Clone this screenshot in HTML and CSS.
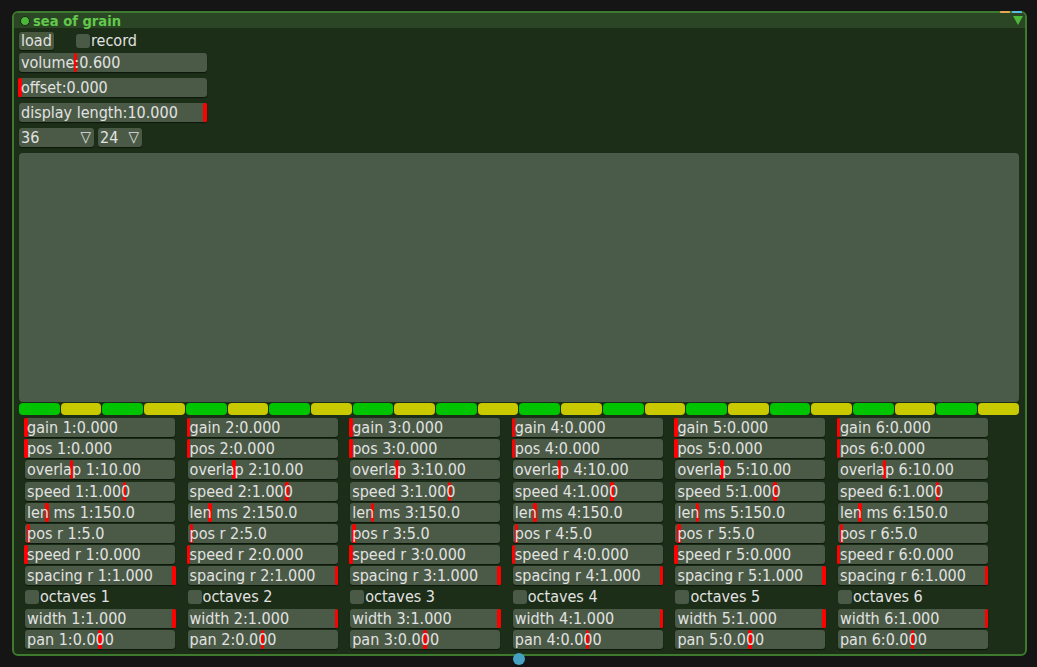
FILE: index.html
```html
<!DOCTYPE html>
<html>
<head>
<meta charset="utf-8">
<link rel="stylesheet" href="styles.css">
</head>
<body>
<div class="panel">
  <span class="pin pin-orange"></span>
  <span class="pin pin-blue"></span>
  <div class="header">
    <span class="dot"></span>
    <span class="title">sea of grain</span>
    <svg class="collapse" width="10" height="9" viewBox="0 0 10 9"><polygon points="0,0 10,0 5,9" fill="#4cb838"/></svg>
  </div>
  <div class="content">
    <div class="toprow">
      <div class="button">load</div>
      <div class="toggle"><span class="box"></span><span class="label">record</span></div>
    </div>
    <div class="slider wide first"><span class="mark" style="left:calc(0.3 * (100% - 2px) - 1px)"></span><span class="txt">volume:0.600</span></div>
    <div class="slider wide"><span class="mark" style="left:calc(0 * (100% - 2px) - 1px)"></span><span class="txt">offset:0.000</span></div>
    <div class="slider wide"><span class="mark" style="left:calc(1 * (100% - 2px) - 2px)"></span><span class="txt">display length:10.000</span></div>
    <div class="menus">
      <div class="menu m1"><span>36</span><span class="tri">▽</span></div>
      <div class="menu m2"><span>24</span><span class="tri">▽</span></div>
    </div>
    <div class="display"></div>
    <div class="bar">
      <span class="g"></span><span class="y"></span><span class="g"></span><span class="y"></span>
      <span class="g"></span><span class="y"></span><span class="g"></span><span class="y"></span>
      <span class="g"></span><span class="y"></span><span class="g"></span><span class="y"></span>
      <span class="g"></span><span class="y"></span><span class="g"></span><span class="y"></span>
      <span class="g"></span><span class="y"></span><span class="g"></span><span class="y"></span>
      <span class="g"></span><span class="y"></span><span class="g"></span><span class="y"></span>
    </div>
    <div class="voices">
      <div class="voice">
        <div class="slider"><span class="mark" style="left:calc(0 * (100% - 2px) - 1px)"></span><span class="txt">gain 1:0.000</span></div>
        <div class="slider"><span class="mark" style="left:calc(0 * (100% - 2px) - 1px)"></span><span class="txt">pos 1:0.000</span></div>
        <div class="slider"><span class="mark" style="left:calc(0.31 * (100% - 2px) - 1px)"></span><span class="txt">overlap 1:10.00</span></div>
        <div class="slider"><span class="mark" style="left:calc(0.667 * (100% - 2px) - 1px)"></span><span class="txt">speed 1:1.000</span></div>
        <div class="slider"><span class="mark" style="left:calc(0.145 * (100% - 2px) - 1px)"></span><span class="txt">len ms 1:150.0</span></div>
        <div class="slider"><span class="mark" style="left:calc(0.02 * (100% - 2px) - 1px)"></span><span class="txt">pos r 1:5.0</span></div>
        <div class="slider"><span class="mark" style="left:calc(0 * (100% - 2px) - 1px)"></span><span class="txt">speed r 1:0.000</span></div>
        <div class="slider"><span class="mark" style="left:calc(1 * (100% - 2px) - 1px)"></span><span class="txt">spacing r 1:1.000</span></div>
        <div class="toggle small"><span class="box"></span><span class="label">octaves 1</span></div>
        <div class="slider"><span class="mark" style="left:calc(1 * (100% - 2px) - 1px)"></span><span class="txt">width 1:1.000</span></div>
        <div class="slider"><span class="mark" style="left:calc(0.5 * (100% - 2px) - 1px)"></span><span class="txt">pan 1:0.000</span></div>
      </div>
      <div class="voice">
        <div class="slider"><span class="mark" style="left:calc(0 * (100% - 2px) - 1px)"></span><span class="txt">gain 2:0.000</span></div>
        <div class="slider"><span class="mark" style="left:calc(0 * (100% - 2px) - 1px)"></span><span class="txt">pos 2:0.000</span></div>
        <div class="slider"><span class="mark" style="left:calc(0.31 * (100% - 2px) - 1px)"></span><span class="txt">overlap 2:10.00</span></div>
        <div class="slider"><span class="mark" style="left:calc(0.667 * (100% - 2px) - 1px)"></span><span class="txt">speed 2:1.000</span></div>
        <div class="slider"><span class="mark" style="left:calc(0.145 * (100% - 2px) - 1px)"></span><span class="txt">len ms 2:150.0</span></div>
        <div class="slider"><span class="mark" style="left:calc(0.02 * (100% - 2px) - 1px)"></span><span class="txt">pos r 2:5.0</span></div>
        <div class="slider"><span class="mark" style="left:calc(0 * (100% - 2px) - 1px)"></span><span class="txt">speed r 2:0.000</span></div>
        <div class="slider"><span class="mark" style="left:calc(1 * (100% - 2px) - 1px)"></span><span class="txt">spacing r 2:1.000</span></div>
        <div class="toggle small"><span class="box"></span><span class="label">octaves 2</span></div>
        <div class="slider"><span class="mark" style="left:calc(1 * (100% - 2px) - 1px)"></span><span class="txt">width 2:1.000</span></div>
        <div class="slider"><span class="mark" style="left:calc(0.5 * (100% - 2px) - 1px)"></span><span class="txt">pan 2:0.000</span></div>
      </div>
      <div class="voice">
        <div class="slider"><span class="mark" style="left:calc(0 * (100% - 2px) - 1px)"></span><span class="txt">gain 3:0.000</span></div>
        <div class="slider"><span class="mark" style="left:calc(0 * (100% - 2px) - 1px)"></span><span class="txt">pos 3:0.000</span></div>
        <div class="slider"><span class="mark" style="left:calc(0.31 * (100% - 2px) - 1px)"></span><span class="txt">overlap 3:10.00</span></div>
        <div class="slider"><span class="mark" style="left:calc(0.667 * (100% - 2px) - 1px)"></span><span class="txt">speed 3:1.000</span></div>
        <div class="slider"><span class="mark" style="left:calc(0.145 * (100% - 2px) - 1px)"></span><span class="txt">len ms 3:150.0</span></div>
        <div class="slider"><span class="mark" style="left:calc(0.02 * (100% - 2px) - 1px)"></span><span class="txt">pos r 3:5.0</span></div>
        <div class="slider"><span class="mark" style="left:calc(0 * (100% - 2px) - 1px)"></span><span class="txt">speed r 3:0.000</span></div>
        <div class="slider"><span class="mark" style="left:calc(1 * (100% - 2px) - 1px)"></span><span class="txt">spacing r 3:1.000</span></div>
        <div class="toggle small"><span class="box"></span><span class="label">octaves 3</span></div>
        <div class="slider"><span class="mark" style="left:calc(1 * (100% - 2px) - 1px)"></span><span class="txt">width 3:1.000</span></div>
        <div class="slider"><span class="mark" style="left:calc(0.5 * (100% - 2px) - 1px)"></span><span class="txt">pan 3:0.000</span></div>
      </div>
      <div class="voice">
        <div class="slider"><span class="mark" style="left:calc(0 * (100% - 2px) - 1px)"></span><span class="txt">gain 4:0.000</span></div>
        <div class="slider"><span class="mark" style="left:calc(0 * (100% - 2px) - 1px)"></span><span class="txt">pos 4:0.000</span></div>
        <div class="slider"><span class="mark" style="left:calc(0.31 * (100% - 2px) - 1px)"></span><span class="txt">overlap 4:10.00</span></div>
        <div class="slider"><span class="mark" style="left:calc(0.667 * (100% - 2px) - 1px)"></span><span class="txt">speed 4:1.000</span></div>
        <div class="slider"><span class="mark" style="left:calc(0.145 * (100% - 2px) - 1px)"></span><span class="txt">len ms 4:150.0</span></div>
        <div class="slider"><span class="mark" style="left:calc(0.02 * (100% - 2px) - 1px)"></span><span class="txt">pos r 4:5.0</span></div>
        <div class="slider"><span class="mark" style="left:calc(0 * (100% - 2px) - 1px)"></span><span class="txt">speed r 4:0.000</span></div>
        <div class="slider"><span class="mark" style="left:calc(1 * (100% - 2px) - 1px)"></span><span class="txt">spacing r 4:1.000</span></div>
        <div class="toggle small"><span class="box"></span><span class="label">octaves 4</span></div>
        <div class="slider"><span class="mark" style="left:calc(1 * (100% - 2px) - 1px)"></span><span class="txt">width 4:1.000</span></div>
        <div class="slider"><span class="mark" style="left:calc(0.5 * (100% - 2px) - 1px)"></span><span class="txt">pan 4:0.000</span></div>
      </div>
      <div class="voice">
        <div class="slider"><span class="mark" style="left:calc(0 * (100% - 2px) - 1px)"></span><span class="txt">gain 5:0.000</span></div>
        <div class="slider"><span class="mark" style="left:calc(0 * (100% - 2px) - 1px)"></span><span class="txt">pos 5:0.000</span></div>
        <div class="slider"><span class="mark" style="left:calc(0.31 * (100% - 2px) - 1px)"></span><span class="txt">overlap 5:10.00</span></div>
        <div class="slider"><span class="mark" style="left:calc(0.667 * (100% - 2px) - 1px)"></span><span class="txt">speed 5:1.000</span></div>
        <div class="slider"><span class="mark" style="left:calc(0.145 * (100% - 2px) - 1px)"></span><span class="txt">len ms 5:150.0</span></div>
        <div class="slider"><span class="mark" style="left:calc(0.02 * (100% - 2px) - 1px)"></span><span class="txt">pos r 5:5.0</span></div>
        <div class="slider"><span class="mark" style="left:calc(0 * (100% - 2px) - 1px)"></span><span class="txt">speed r 5:0.000</span></div>
        <div class="slider"><span class="mark" style="left:calc(1 * (100% - 2px) - 1px)"></span><span class="txt">spacing r 5:1.000</span></div>
        <div class="toggle small"><span class="box"></span><span class="label">octaves 5</span></div>
        <div class="slider"><span class="mark" style="left:calc(1 * (100% - 2px) - 1px)"></span><span class="txt">width 5:1.000</span></div>
        <div class="slider"><span class="mark" style="left:calc(0.5 * (100% - 2px) - 1px)"></span><span class="txt">pan 5:0.000</span></div>
      </div>
      <div class="voice">
        <div class="slider"><span class="mark" style="left:calc(0 * (100% - 2px) - 1px)"></span><span class="txt">gain 6:0.000</span></div>
        <div class="slider"><span class="mark" style="left:calc(0 * (100% - 2px) - 1px)"></span><span class="txt">pos 6:0.000</span></div>
        <div class="slider"><span class="mark" style="left:calc(0.31 * (100% - 2px) - 1px)"></span><span class="txt">overlap 6:10.00</span></div>
        <div class="slider"><span class="mark" style="left:calc(0.667 * (100% - 2px) - 1px)"></span><span class="txt">speed 6:1.000</span></div>
        <div class="slider"><span class="mark" style="left:calc(0.145 * (100% - 2px) - 1px)"></span><span class="txt">len ms 6:150.0</span></div>
        <div class="slider"><span class="mark" style="left:calc(0.02 * (100% - 2px) - 1px)"></span><span class="txt">pos r 6:5.0</span></div>
        <div class="slider"><span class="mark" style="left:calc(0 * (100% - 2px) - 1px)"></span><span class="txt">speed r 6:0.000</span></div>
        <div class="slider"><span class="mark" style="left:calc(1 * (100% - 2px) - 1px)"></span><span class="txt">spacing r 6:1.000</span></div>
        <div class="toggle small"><span class="box"></span><span class="label">octaves 6</span></div>
        <div class="slider"><span class="mark" style="left:calc(1 * (100% - 2px) - 1px)"></span><span class="txt">width 6:1.000</span></div>
        <div class="slider"><span class="mark" style="left:calc(0.5 * (100% - 2px) - 1px)"></span><span class="txt">pan 6:0.000</span></div>
      </div>
    </div>
  </div>
  <span class="outlet"></span>
</div>
</body>
</html>
```
FILE: styles.css
```css
html, body {
  margin: 0;
  padding: 0;
  background: #151515;
  width: 1037px;
  height: 667px;
  overflow: hidden;
  font-family: "DejaVu Sans Condensed", "DejaVu Sans", "Liberation Sans", sans-serif;
  font-stretch: semi-condensed;
  font-size: 16px;
  color: #e2e2e2;
}

.panel {
  position: relative;
  box-sizing: border-box;
  margin: 11px 0 0 12px;
  width: 1015px;
  height: 645px;
  border: 2px solid #3d7a2e;
  border-radius: 6px;
  background: #1c2e17;
}

.pin {
  position: absolute;
  top: -2px;
  width: 10px;
  height: 3px;
  border-radius: 1px;
}
.pin-orange { left: 986px; background: #e2a852; }
.pin-blue { left: 998px; background: #5cbcdf; }

.outlet {
  position: absolute;
  left: 499px;
  bottom: -11px;
  width: 12px;
  height: 12px;
  border-radius: 50%;
  background: #46a2c2;
}

.header {
  height: 15px;
  background: #2b4625;
  border-radius: 4px 4px 0 0;
  display: flex;
  align-items: center;
  padding-left: 6px;
  position: relative;
}

.dot {
  width: 8px;
  height: 8px;
  border-radius: 50%;
  background: #4cb838;
  border: 1.5px solid #172a12;
}

.title {
  margin-left: 3px;
  font-weight: bold;
  font-size: 14.6px;
  color: #62c94c;
  line-height: 15px;
}

.collapse {
  position: absolute;
  left: 999px;
  top: 3px;
}

.content {
  padding: 4px 0 0 5px;
}

.toprow {
  display: flex;
  align-items: center;
  height: 18px;
}

.button {
  width: 35px;
  height: 18px;
  box-sizing: border-box;
  padding-left: 2px;
  line-height: 18px;
  background: #48583f;
  border-radius: 3px;
  box-shadow: 0 1px 1px rgba(0, 0, 0, 0.5);
}

.toggle {
  display: flex;
  align-items: center;
  margin-left: 22px;
}
.toggle .box {
  width: 14px;
  height: 14px;
  border-radius: 3px;
  background: #4a5a46;
}
.toggle .label {
  margin-left: 1px;
  line-height: 18px;
}
.toggle.small {
  margin-left: 0;
  height: 19px;
}

.slider {
  position: relative;
  width: 150px;
  height: 19px;
  background: #4a5a46;
  border-radius: 3px;
  box-shadow: 0 1px 1px rgba(0, 0, 0, 0.55);
}
.slider.wide {
  width: 188px;
  margin-top: 6px;
}
.slider.wide.first {
  margin-top: 3px;
}
.slider .mark {
  position: absolute;
  top: 0;
  width: 3.5px;
  height: 19px;
  border-radius: 1.5px;
  background: #ff0000;
}
.slider .txt {
  position: relative;
  padding-left: 2px;
  line-height: 19px;
  white-space: nowrap;
}

.menus {
  display: flex;
  gap: 4px;
  margin-top: 6px;
}
.menu {
  display: flex;
  justify-content: space-between;
  box-sizing: border-box;
  height: 19px;
  line-height: 19px;
  padding: 0 3px 0 2px;
  background: #4a5a46;
  border-radius: 3px;
  box-shadow: 0 1px 1px rgba(0, 0, 0, 0.55);
}
.menu.m1 { width: 75px; }
.menu.m2 { width: 44px; }
.menu .tri {
  font-size: 15px;
}

.display {
  margin-top: 6px;
  width: 1000px;
  height: 249px;
  background: #4b5b49;
  border-radius: 4px;
}

.bar {
  margin-top: 1px;
  width: 1000px;
  height: 12px;
  display: flex;
  gap: 1px;
}
.bar span {
  flex: 1;
  border-radius: 4px;
}
.bar .g { background: #00c400; }
.bar .y { background: #c9c900; }

.voices {
  display: flex;
  gap: 12.6px;
  margin: 3px 0 0 6px;
}
.voice {
  display: flex;
  flex-direction: column;
  gap: 2.2px;
  width: 150px;
}
```
